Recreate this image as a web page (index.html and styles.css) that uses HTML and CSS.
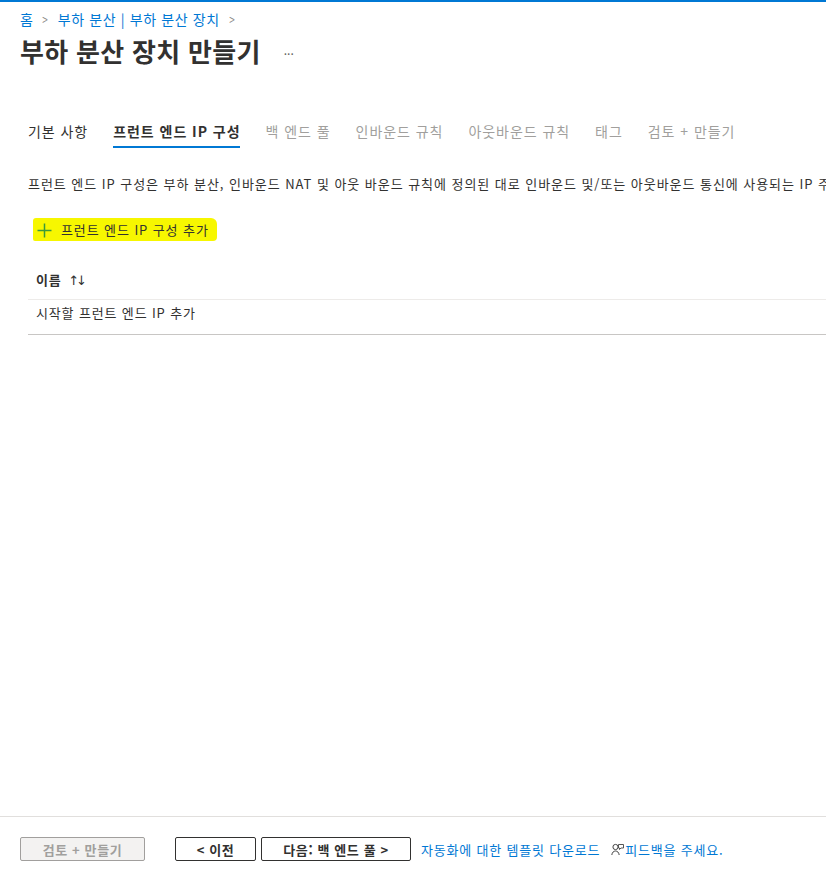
FILE: index.html
```
<!DOCTYPE html>
<html lang="ko">
<head>
    <meta charset="UTF-8">
    <title>부하 분산 장치 만들기</title>
    <link rel="stylesheet" href="styles.css">
</head>
<body>
    <div class="top-bar"></div>

    <div class="page">
        <div class="header">
            <div class="breadcrumb">
                <a href="#">홈</a>
                <span class="chevron">&gt;</span>
                <a href="#">부하 분산 | 부하 분산 장치</a>
                <span class="chevron">&gt;</span>
            </div>
            <div class="title-row">
                <h1>부하 분산 장치 만들기</h1>
                <span class="more">···</span>
            </div>
        </div>

        <div class="content">
            <div class="tabs">
                <span class="tab done">기본 사항</span>
                <span class="tab active">프런트 엔드 IP 구성</span>
                <span class="tab">백 엔드 풀</span>
                <span class="tab">인바운드 규칙</span>
                <span class="tab">아웃바운드 규칙</span>
                <span class="tab">태그</span>
                <span class="tab">검토 + 만들기</span>
            </div>

            <p class="description">프런트 엔드 IP 구성은 부하 분산, 인바운드 NAT 및 아웃 바운드 규칙에 정의된 대로 인바운드 및/또는 아웃바운드 통신에 사용되는 IP 주소입니다.</p>

            <div class="add-row">
                <span class="highlight">
                    <svg class="plus" width="15" height="15" viewBox="0 0 15 15">
                        <path d="M7.5 0.5v14M0.5 7.5h14" stroke="#3a9a3a" stroke-width="1.5" fill="none"/>
                    </svg>
                    프런트 엔드 IP 구성 추가
                </span>
            </div>

            <div class="table">
                <div class="table-head">이름 <span class="sort">↑↓</span></div>
                <div class="table-row">시작할 프런트 엔드 IP 추가</div>
            </div>
        </div>

        <div class="footer">
            <button class="btn" disabled>검토 + 만들기</button>
            <div class="nav-buttons">
                <button class="btn">&lt; 이전</button>
                <button class="btn">다음: 백 엔드 풀 &gt;</button>
            </div>
            <a href="#" class="link">자동화에 대한 템플릿 다운로드</a>
            <a href="#" class="link feedback">
                <svg width="13" height="13" viewBox="0 0 13 13">
                    <circle cx="4.5" cy="4" r="2.6" stroke="#444" stroke-width="1" fill="none"/>
                    <path d="M0.8 12c0.4-2.6 1.8-4 3.7-4s3.3 1.4 3.7 4" stroke="#444" stroke-width="1" fill="none"/>
                    <path d="M7.5 1.5h5v3.5h-2.5l-1.5 1.5v-1.5h-1z" stroke="#444" stroke-width="0.9" fill="#fff"/>
                </svg>피드백을 주세요.
            </a>
        </div>
    </div>
</body>
</html>
```

FILE: styles.css
```
body {
    margin: 0;
    padding: 0;
    font-family: "Noto Sans CJK KR", "Noto Sans", sans-serif;
    color: #323130;
    background: #fff;
    height: 100vh;
    overflow: hidden;
    display: flex;
    flex-direction: column;
}

.top-bar {
    height: 2px;
    background: #0078d4;
    flex-shrink: 0;
}

.page {
    flex: 1;
    display: flex;
    flex-direction: column;
    min-height: 0;
}

.header {
    padding: 7px 20px 0;
}

.breadcrumb {
    display: flex;
    align-items: center;
    gap: 8px;
    font-size: 14px;
    line-height: 20px;
    letter-spacing: 0.6px;
}

.breadcrumb a {
    color: #0078d4;
    text-decoration: none;
}

.chevron {
    color: #8a8886;
    font-size: 14px;
    transform: scaleX(0.7);
}

.title-row {
    display: flex;
    align-items: center;
    margin-top: 4px;
}

h1 {
    margin: 0;
    font-size: 26px;
    font-weight: 600;
    line-height: 36px;
    letter-spacing: 0.3px;
    color: #323130;
}

.more {
    margin-left: 23px;
    margin-top: 4px;
    font-size: 12px;
    color: #605e5c;
}

.content {
    flex: 1;
    padding: 52px 0 0 28px;
}

.tabs {
    display: flex;
    gap: 25px;
    font-size: 14px;
    line-height: 20px;
    letter-spacing: 0.95px;
}

.tab {
    color: #a19f9d;
    padding-bottom: 5px;
    border-bottom: 2px solid transparent;
}

.tab.done {
    color: #323130;
}

.tab.active {
    color: #323130;
    font-weight: 700;
    border-bottom-color: #0078d4;
}

.description {
    margin: 26px 0 0;
    font-size: 13px;
    line-height: 20px;
    letter-spacing: 0.95px;
    white-space: nowrap;
    overflow: hidden;
}

.add-row {
    margin-top: 24px;
    font-size: 13px;
}

.highlight {
    display: inline-flex;
    align-items: center;
    gap: 9px;
    background: #f7f700;
    padding: 2px 8px 1px 4px;
    margin-left: 5px;
    border-radius: 3px 6px 4px 2px;
    line-height: 20px;
    letter-spacing: 0.9px;
    color: #323130;
}

.table {
    margin-top: 19px;
    font-size: 13px;
    letter-spacing: 0.85px;
}

.table-head {
    font-weight: 700;
    padding: 9px 8px 8px;
    line-height: 20px;
    border-bottom: 1px solid #edebe9;
}

.sort {
    font-family: "DejaVu Sans", sans-serif;
    font-weight: 400;
    font-size: 13px;
    margin-left: 2px;
    letter-spacing: -3px;
    color: #323130;
}

.table-row {
    padding: 3px 8px 11px;
    line-height: 20px;
    border-bottom: 1px solid #c8c6c4;
}

.footer {
    display: flex;
    align-items: center;
    border-top: 1px solid #e1dfdd;
    padding: 20px 20px 12px;
    height: 24px;
    font-size: 13px;
}

.nav-buttons {
    display: flex;
    gap: 5px;
    margin-left: 30px;
}

.btn {
    height: 24px;
    padding: 0 8px;
    font-family: inherit;
    font-size: 13px;
    font-weight: 700;
    letter-spacing: 0.6px;
    color: #323130;
    background: #fff;
    border: 1px solid #323130;
    border-radius: 2px;
}

.footer > .btn {
    width: 125px;
}

.nav-buttons .btn:first-child {
    width: 81px;
}

.nav-buttons .btn:last-child {
    width: 150px;
}

.btn:disabled {
    background: #f3f2f1;
    border-color: #a19f9d;
    color: #a19f9d;
}

.link {
    color: #0078d4;
    text-decoration: none;
    margin-left: 10px;
    letter-spacing: 0.8px;
}

.feedback {
    display: inline-flex;
    align-items: center;
    gap: 1px;
    margin-left: 11px;
}
```
